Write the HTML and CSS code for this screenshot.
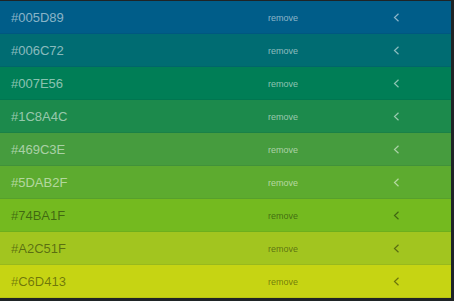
FILE: index.html
```html
<!DOCTYPE html>
<html>
<head>
<meta charset="utf-8">
<link rel="stylesheet" href="styles.css">
</head>
<body>
<div class="frame">
  <ul class="list">
    <li class="row light" style="background:#005D89"><span class="hex">#005D89</span><span class="remove">remove</span><span class="chev"><svg width="7" height="9" viewBox="0 0 7 9"><polyline points="5.5,0.8 1.5,4.5 5.5,8.2" fill="none" stroke="currentColor" stroke-width="1.2"/></svg></span></li>
    <li class="row light" style="background:#006C72"><span class="hex">#006C72</span><span class="remove">remove</span><span class="chev"><svg width="7" height="9" viewBox="0 0 7 9"><polyline points="5.5,0.8 1.5,4.5 5.5,8.2" fill="none" stroke="currentColor" stroke-width="1.2"/></svg></span></li>
    <li class="row light" style="background:#007E56"><span class="hex">#007E56</span><span class="remove">remove</span><span class="chev"><svg width="7" height="9" viewBox="0 0 7 9"><polyline points="5.5,0.8 1.5,4.5 5.5,8.2" fill="none" stroke="currentColor" stroke-width="1.2"/></svg></span></li>
    <li class="row light" style="background:#1C8A4C"><span class="hex">#1C8A4C</span><span class="remove">remove</span><span class="chev"><svg width="7" height="9" viewBox="0 0 7 9"><polyline points="5.5,0.8 1.5,4.5 5.5,8.2" fill="none" stroke="currentColor" stroke-width="1.2"/></svg></span></li>
    <li class="row light" style="background:#469C3E"><span class="hex">#469C3E</span><span class="remove">remove</span><span class="chev"><svg width="7" height="9" viewBox="0 0 7 9"><polyline points="5.5,0.8 1.5,4.5 5.5,8.2" fill="none" stroke="currentColor" stroke-width="1.2"/></svg></span></li>
    <li class="row light" style="background:#5DAB2F"><span class="hex">#5DAB2F</span><span class="remove">remove</span><span class="chev"><svg width="7" height="9" viewBox="0 0 7 9"><polyline points="5.5,0.8 1.5,4.5 5.5,8.2" fill="none" stroke="currentColor" stroke-width="1.2"/></svg></span></li>
    <li class="row dark" style="background:#74BA1F"><span class="hex">#74BA1F</span><span class="remove">remove</span><span class="chev"><svg width="7" height="9" viewBox="0 0 7 9"><polyline points="5.5,0.8 1.5,4.5 5.5,8.2" fill="none" stroke="currentColor" stroke-width="1.2"/></svg></span></li>
    <li class="row dark" style="background:#A2C51F"><span class="hex">#A2C51F</span><span class="remove">remove</span><span class="chev"><svg width="7" height="9" viewBox="0 0 7 9"><polyline points="5.5,0.8 1.5,4.5 5.5,8.2" fill="none" stroke="currentColor" stroke-width="1.2"/></svg></span></li>
    <li class="row dark" style="background:#C6D413"><span class="hex">#C6D413</span><span class="remove">remove</span><span class="chev"><svg width="7" height="9" viewBox="0 0 7 9"><polyline points="5.5,0.8 1.5,4.5 5.5,8.2" fill="none" stroke="currentColor" stroke-width="1.2"/></svg></span></li>
  </ul>
</div>
</body>
</html>
```
FILE: styles.css
```css
html, body {
  margin: 0;
  padding: 0;
  background: #1f2426;
  width: 454px;
  height: 301px;
  overflow: hidden;
}
.frame {
  padding-top: 1px;
  width: 451px;
}
.list {
  list-style: none;
  margin: 0;
  padding: 0;
  font-family: "Liberation Sans", Arial, sans-serif;
}
.row {
  height: 33px;
  display: flex;
  align-items: center;
  box-shadow: inset 0 -1px 0 rgba(0, 0, 0, 0.06);
}
.hex {
  width: 257px;
  padding-left: 11px;
  font-size: 13px;
}
.remove {
  width: 125px;
  font-size: 9px;
}
.chev {
  display: flex;
  align-items: center;
}
.light {
  color: rgba(255, 255, 255, 0.55);
}
.dark {
  color: rgba(0, 0, 0, 0.45);
}
```
